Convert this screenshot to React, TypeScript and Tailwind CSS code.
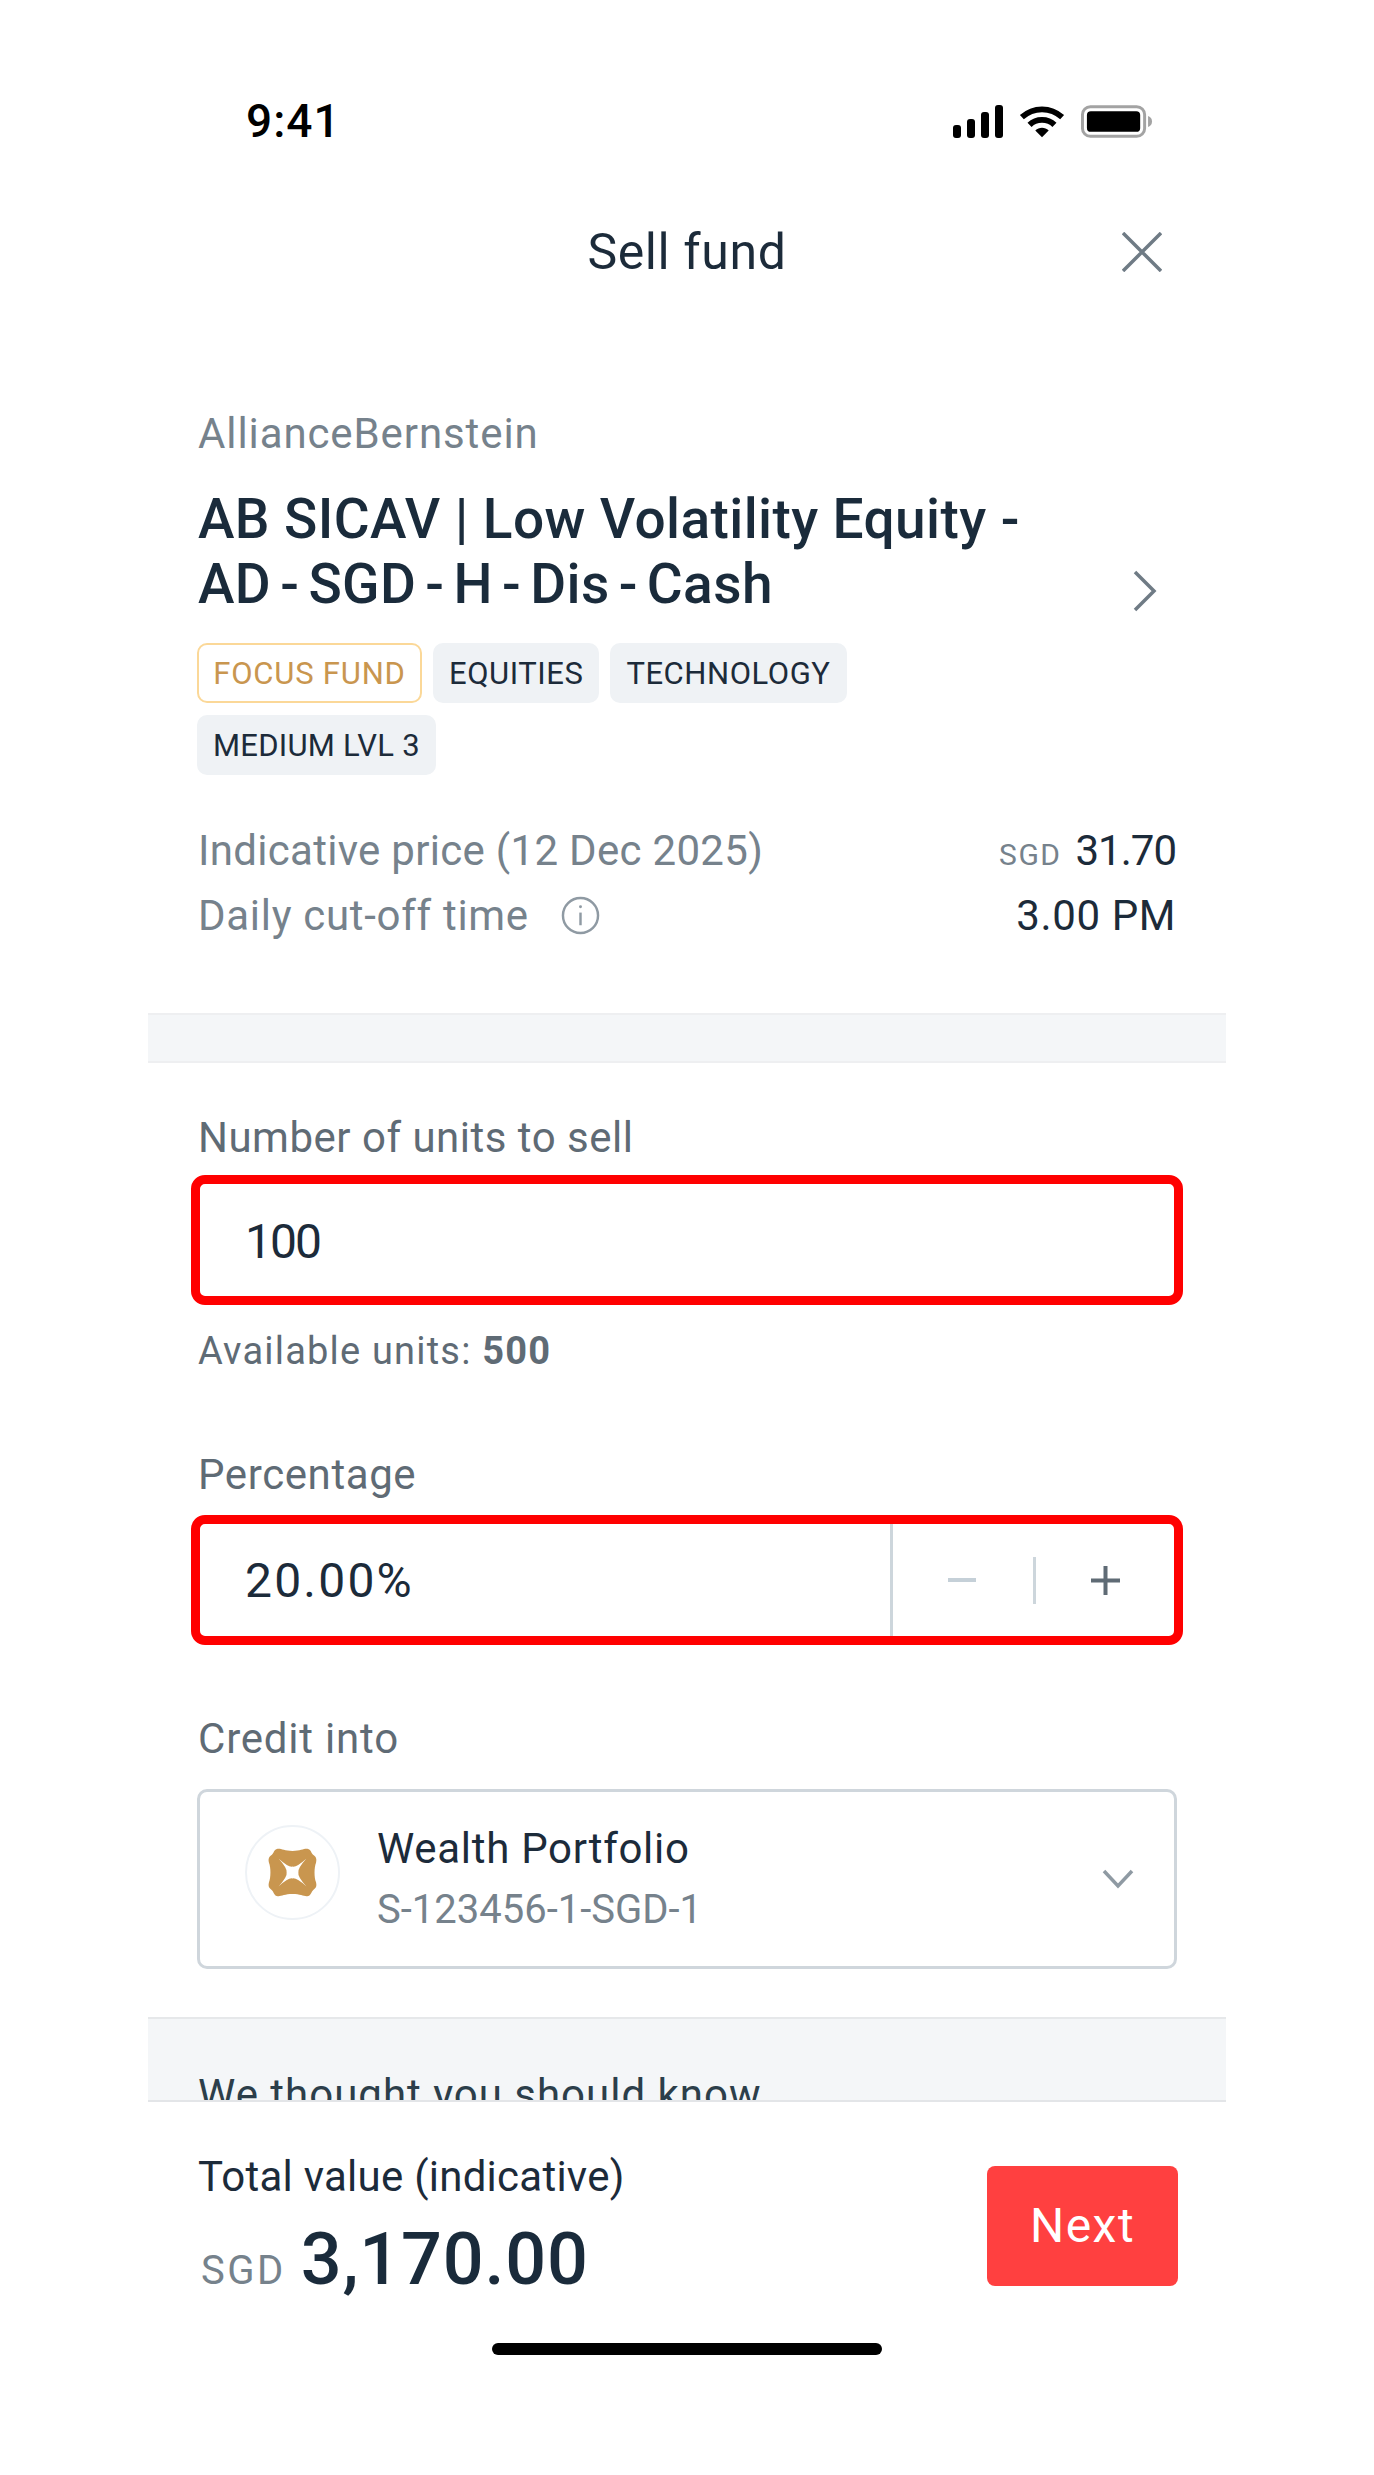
import React from "react";

function Signal() {
  return (
    <svg width="50" height="33" viewBox="0 0 50 33" fill="#000">
      <rect x="0" y="20" width="8" height="13" rx="3" />
      <rect x="14" y="14" width="8" height="19" rx="3" />
      <rect x="28" y="7" width="8" height="26" rx="3" />
      <rect x="42" y="0" width="8" height="33" rx="3" />
    </svg>
  );
}

function Wifi() {
  return (
    <svg width="46" height="33" viewBox="0 0 48 33" fill="none" stroke="#000" strokeWidth="6">
      <path d="M3 12 C15 1 33 1 45 12" />
      <path d="M11 20 C18 13 30 13 37 20" />
      <path d="M17 26 L24 33 L31 26 C27 22 21 22 17 26 Z" fill="#000" stroke="none" />
    </svg>
  );
}

function Battery() {
  return (
    <svg width="72" height="33" viewBox="0 0 73 33">
      <rect x="1.5" y="1.5" width="63" height="30" rx="8" fill="none" stroke="#a3a3a3" strokeWidth="3" />
      <rect x="6" y="6" width="54" height="21" rx="4" fill="#000" />
      <path d="M68 11 C71 12 72 14 72 16.5 C72 19 71 21 68 22 Z" fill="#a3a3a3" />
    </svg>
  );
}

function Tag({ children, gold, tight }: { children: React.ReactNode; gold?: boolean; tight?: boolean }) {
  return (
    <span
      className={
        gold
          ? "flex h-[60px] w-[225px] items-center justify-center rounded-[10px] border-2 border-[#fbd898] bg-white pt-[2px] text-[31px] tracking-[0.8px] text-[#c9964f]"
          : tight
            ? "flex h-[60px] items-center justify-center rounded-[10px] bg-[#eff2f5] px-[16px] pt-[2px] text-[31px] tracking-[0.25px] text-[#1c2b3a]"
            : "flex h-[60px] items-center justify-center rounded-[10px] bg-[#eff2f5] px-[16px] pt-[2px] text-[31px] tracking-[0.55px] text-[#1c2b3a]"
      }
    >
      {children}
    </span>
  );
}

function Logo() {
  return (
    <span className="-mt-[13px] flex h-[95px] w-[95px] shrink-0 items-center justify-center rounded-full border-2 border-[#eef2f6] bg-white">
      <svg width="49" height="49" viewBox="0 0 50 50">
        <path
          d="M9 1 C13 0 16 3 25 3 C34 3 37 0 41 1 C44 2 44 5 46 7 C49 9 50 11 49 15 C47 20 47 30 49 35 C50 39 49 41 46 43 C44 45 44 48 41 49 C37 50 34 47 25 47 C16 47 13 50 9 49 C6 48 6 45 4 43 C1 41 0 39 1 35 C3 30 3 20 1 15 C0 11 1 9 4 7 C6 5 6 2 9 1 Z"
          fill="#c9964f"
        />
        <path
          d="M11 11 Q21 20 25 19 Q29 20 39 11 Q30 21 31 25 Q30 29 39 39 Q29 30 25 31 Q21 30 11 39 Q20 29 19 25 Q20 21 11 11 Z"
          fill="#fff"
        />
      </svg>
    </span>
  );
}

export default function App() {
  return (
    <div className="flex h-[2475px] w-full justify-center overflow-hidden bg-white font-['Roboto',sans-serif]">
      <div className="flex w-[1078px] flex-col">
        {/* status bar */}
        <div className="flex h-[190px] items-start justify-between pl-[98px] pr-[73px] pt-[93px]">
          <span className="text-[46px] font-medium leading-[56px] tracking-[1px] text-black">9:41</span>
          <div className="flex h-[56px] items-center gap-[16px]">
            <Signal />
            <Wifi />
            <Battery />
          </div>
        </div>

        {/* nav */}
        <div className="relative flex h-[124px] items-center justify-center">
          <span className="text-[50px] font-[450] tracking-[0.6px] text-[#1c2b3a]">Sell fund</span>
          <svg className="absolute left-[974px] top-[42px]" width="40" height="40" viewBox="0 0 40 40" fill="none" stroke="#6f7b85" strokeWidth="3.5">
            <path d="M1 1 L39 39 M39 1 L1 39" />
          </svg>
        </div>

        {/* fund */}
        <div className="px-[50px] pb-[65px] pt-[96px]">
          <div className="text-[42px] leading-[48px] tracking-[0.9px] text-[#76828c]">AllianceBernstein</div>
          <div className="relative mt-[29px] text-[55px] font-medium leading-[65px] tracking-[0.4px] text-[#1a2b3b]">
            <div>AB SICAV | Low Volatility Equity -</div>
            <div className="[word-spacing:-5px]">AD - SGD - H - Dis - Cash</div>
            <svg className="absolute left-[934px] top-[83px]" width="26" height="42" viewBox="0 0 26 42" fill="none" stroke="#6f7b85" strokeWidth="3.5">
              <path d="M3 2 L22 21 L3 40" />
            </svg>
          </div>
          <div className="-ml-[1px] mt-[26px] flex w-[760px] flex-wrap gap-x-[11px] gap-y-[12px]">
            <Tag gold>FOCUS FUND</Tag>
            <Tag>EQUITIES</Tag>
            <Tag>TECHNOLOGY</Tag>
            <Tag tight>MEDIUM LVL 3</Tag>
          </div>
          <div className="mt-[43px] flex items-center justify-between text-[42px] leading-[65px]">
            <span className="tracking-[0.3px] text-[#76828c]">Indicative price (12 Dec 2025)</span>
            <span className="font-[450] tracking-[-1px] text-[#1c2b3a]">
              <span className="mr-[14px] text-[30px] font-normal leading-none tracking-[1.5px] text-[#76828c]">SGD</span>31.70
            </span>
          </div>
          <div className="flex items-center justify-between text-[42px] leading-[65px]">
            <span className="flex items-center tracking-[0.7px] text-[#76828c]">
              Daily cut-off time
              <svg className="ml-[32px]" width="39" height="39" viewBox="0 0 40 40" fill="none" stroke="#8f9aa3" strokeWidth="2.5">
                <circle cx="20" cy="20" r="18" />
                <path d="M20 17 V30" />
                <circle cx="20" cy="11" r="1.5" fill="#8f9aa3" stroke="none" />
              </svg>
            </span>
            <span className="font-[450] tracking-[0.6px] text-[#1c2b3a]">3.00 PM</span>
          </div>
        </div>

        <div className="h-[50px] border-y-2 border-[#eeeff1] bg-[#f4f6f8]" />

        {/* form */}
        <div className="px-[50px] pt-[51px]">
          <div className="text-[42px] leading-[48px] tracking-[0.5px] text-[#5f6b75]">Number of units to sell</div>
          <div className="-mx-[7px] mt-[13px] flex h-[130px] items-center rounded-[14px] border-[9px] border-[#ff0000] bg-white pl-[45px] pt-[3px] text-[48px] tracking-[-2px] text-[#1c2b3a]">
            100
          </div>
          <div className="mt-[24px] text-[38px] leading-[44px] tracking-[1.2px] text-[#5f6b75]">
            Available units: <span className="font-bold">500</span>
          </div>
          <div className="mt-[78px] text-[42px] leading-[48px] tracking-[0.6px] text-[#5f6b75]">Percentage</div>
          <div className="-mx-[7px] mt-[16px] flex h-[130px] items-stretch rounded-[14px] border-[9px] border-[#ff0000] bg-white text-[48px] text-[#1c2b3a]">
            <div className="flex w-[693px] items-center border-r-[3px] border-[#cdd6dc] pl-[45px] pt-[2px] tracking-[2.2px]">20.00%</div>
            <div className="flex flex-1 items-center">
              <div className="flex w-[140px] justify-center pr-[3px]">
                <div className="h-[4px] w-[28px] bg-[#c5d0d8]" />
              </div>
              <div className="h-[47px] w-[3px] bg-[#cdd6dc]" />
              <div className="flex flex-1 justify-center">
                <svg width="29" height="29" viewBox="0 0 29 29" fill="none" stroke="#5f6b75" strokeWidth="4">
                  <path d="M14.5 0 V29 M0 14.5 H29" />
                </svg>
              </div>
            </div>
          </div>
          <div className="mt-[70px] text-[42px] leading-[48px] tracking-[0.8px] text-[#5f6b75]">Credit into</div>
          <div className="-mx-[1px] mt-[26px] flex h-[180px] items-center rounded-[10px] border-[3px] border-[#cfd6dc] pl-[45px] pr-[40px]">
            <Logo />
            <div className="ml-[37px] flex-1">
              <div className="text-[42px] font-[450] leading-[61px] tracking-[0.7px] text-[#1c2b3a]">Wealth Portfolio</div>
              <div className="text-[40px] leading-[61px] text-[#76828c]">S-123456-1-SGD-1</div>
            </div>
            <svg width="32" height="20" viewBox="0 0 32 20" fill="none" stroke="#8f9aa3" strokeWidth="3.5">
              <path d="M2 2 L16 17 L30 2" />
            </svg>
          </div>
        </div>

        <div className="mt-[48px] h-[83px] overflow-hidden border-t-2 border-[#e6e8ea] bg-[#f4f6f8] px-[50px] pt-[52px]">
          <div className="text-[42px] leading-[48px] tracking-[1px] text-[#2c3e4a]">We thought you should know</div>
        </div>

        {/* footer */}
        <div className="flex h-[243px] items-start justify-between border-t-2 border-[#e3e5e8] bg-white pl-[50px] pr-[48px] pt-[51px]">
          <div>
            <div className="text-[42px] leading-[48px] tracking-[0.25px] text-[#1c2b3a]">Total value (indicative)</div>
            <div className="mt-[23px] flex items-baseline leading-[72px] text-[#1a2b3b]">
              <span className="ml-[3px] mr-[15px] text-[40px] tracking-[2.5px] text-[#76828c]">SGD</span>
              <span className="text-[72px] font-medium tracking-[0.8px]">3,170.00</span>
            </div>
          </div>
          <button className="mt-[13px] flex h-[120px] w-[191px] items-center justify-center rounded-[8px] bg-[#ff4040] text-[48px] tracking-[1.5px] text-white">
            Next
          </button>
        </div>

        <div className="mx-auto h-[12px] w-[390px] rounded-full bg-black" />
      </div>
    </div>
  );
}
